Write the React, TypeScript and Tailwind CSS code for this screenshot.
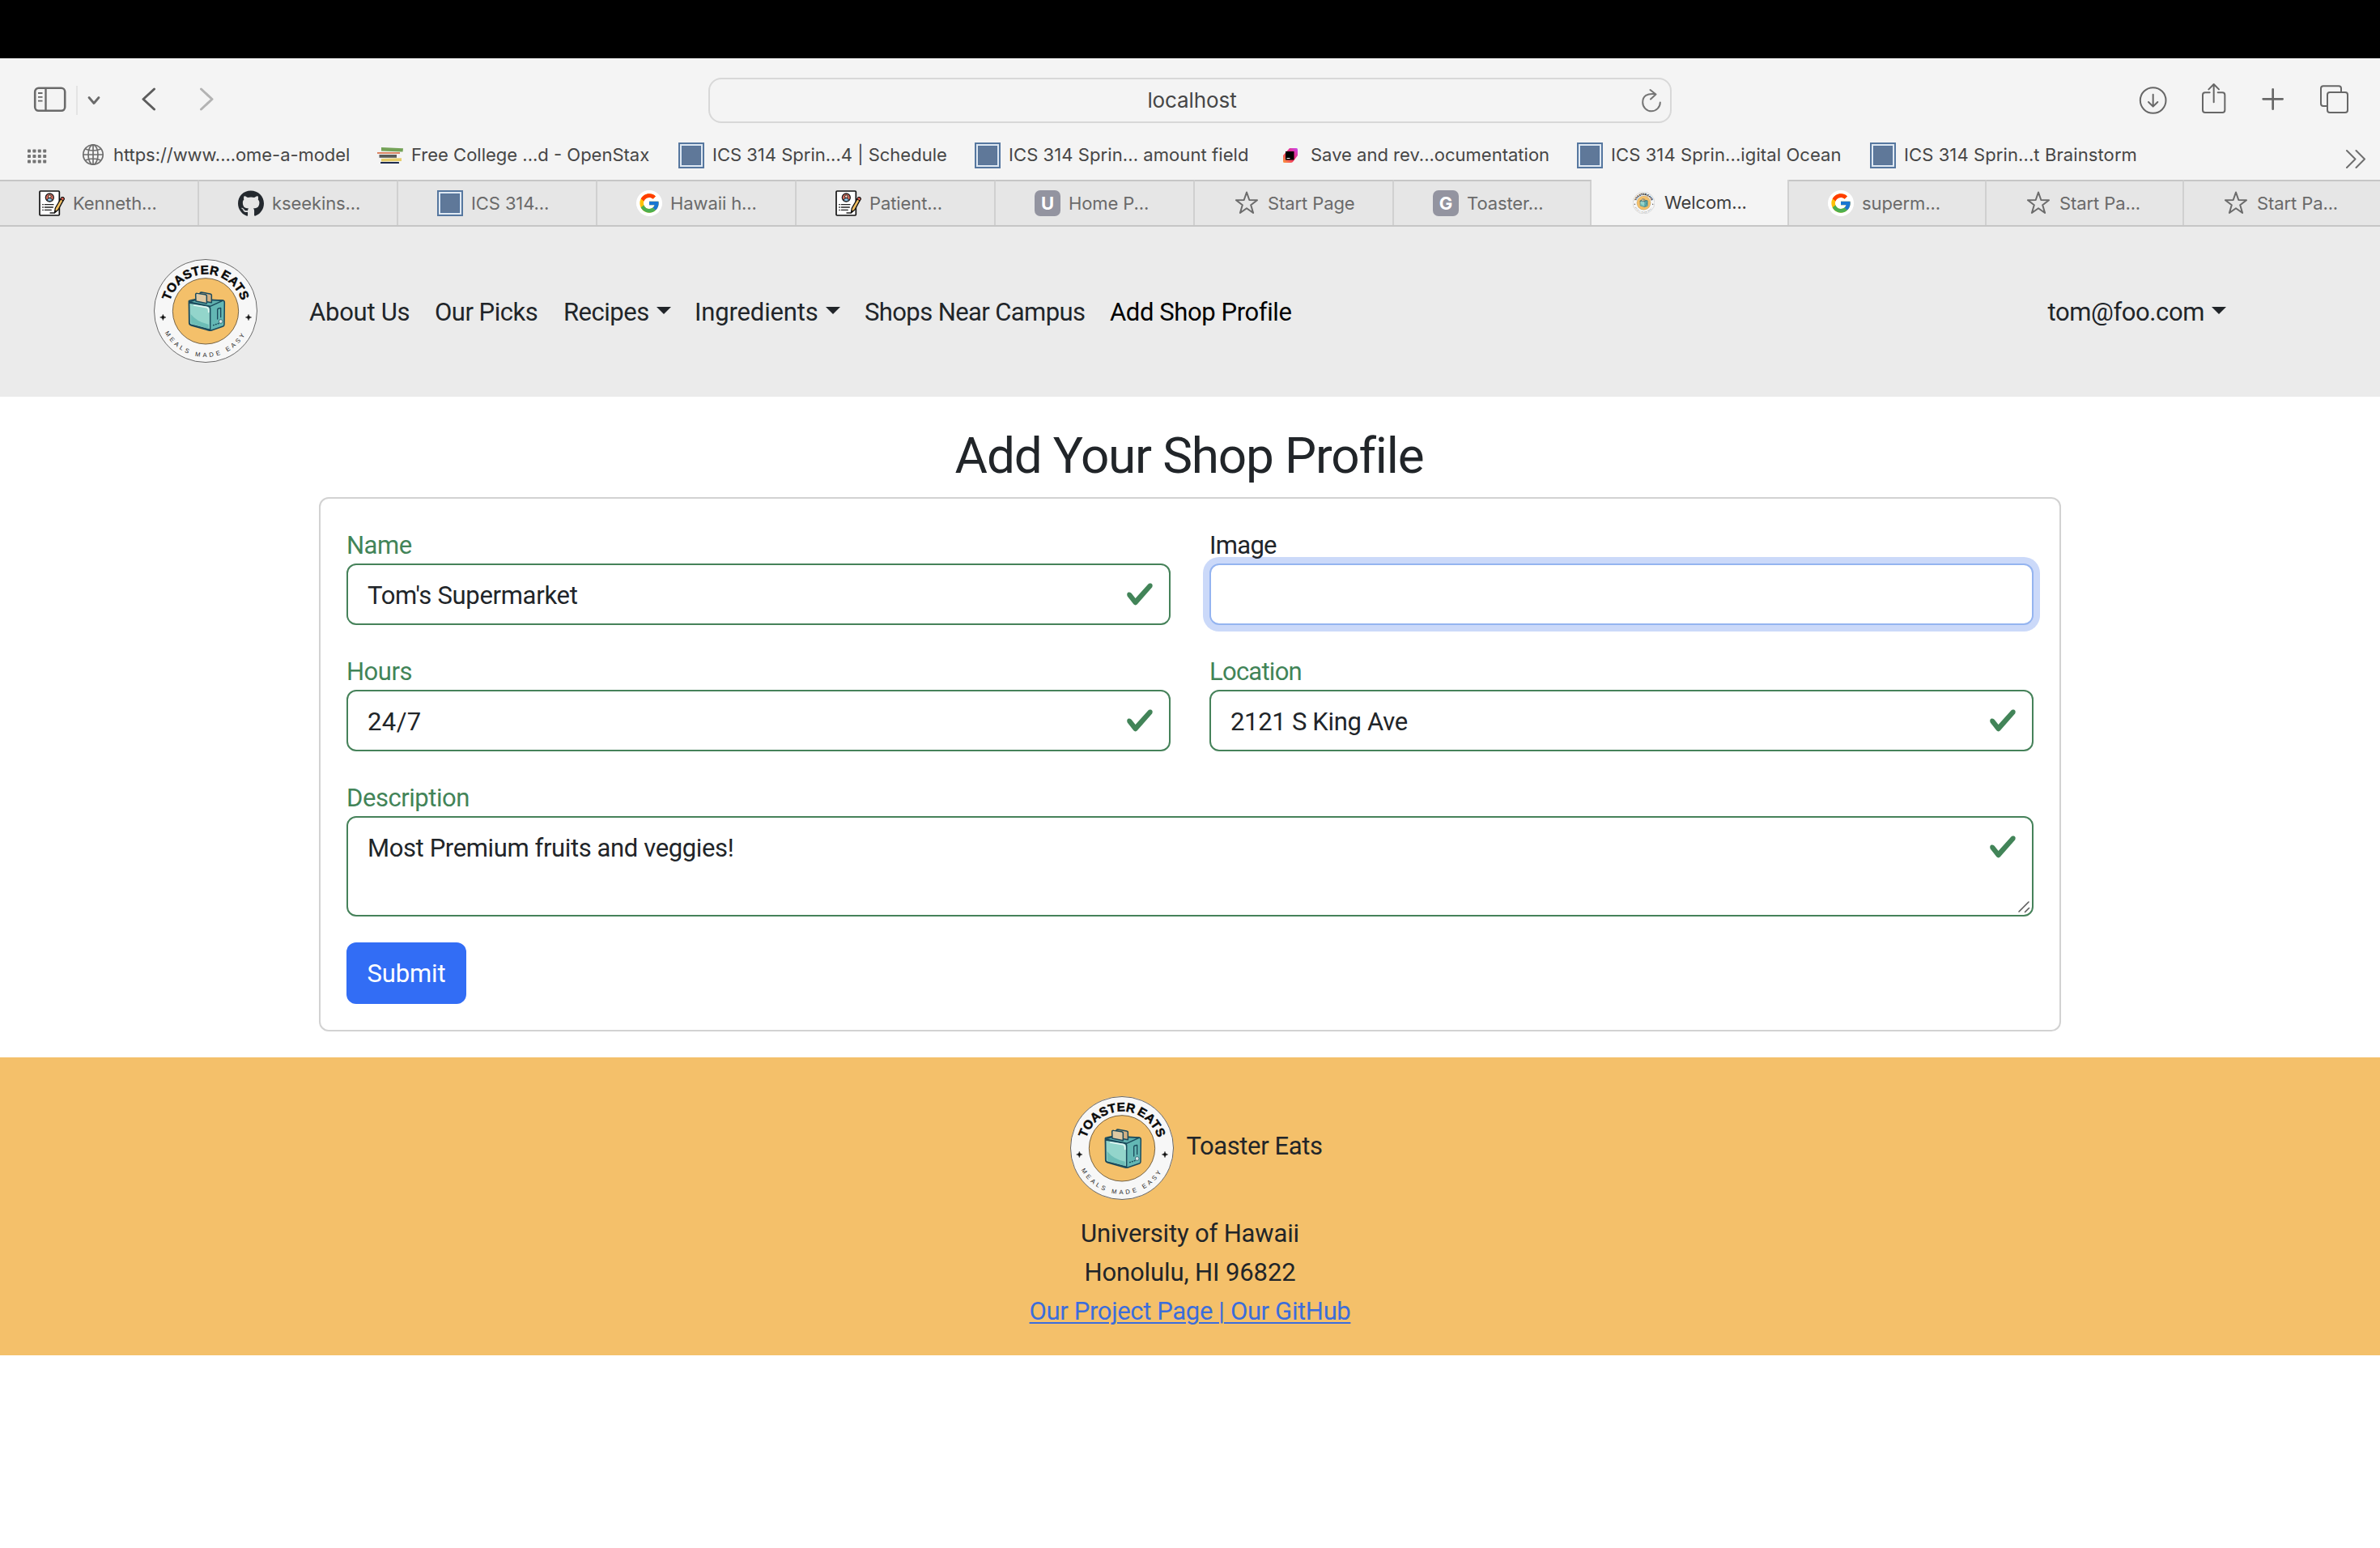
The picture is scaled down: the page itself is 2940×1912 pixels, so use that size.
import type { ReactNode } from "react";
import { FaGithub } from "react-icons/fa";
import { FcGoogle } from "react-icons/fc";

function ToasterLogo({ className }: { className: string }) {
  return (
    <svg className={className} viewBox="29 28 384 384" fill="none">
      <defs>
        <path id="logo-top" d="M 83 222 A 138 138 0 0 1 359 222" />
        <path id="logo-bottom" d="M 50 220 A 171 171 0 0 0 392 220" />
      </defs>
      <circle cx="221" cy="220" r="156" stroke="#f7f7f7" strokeWidth="70" />
      <circle cx="221" cy="220" r="190.5" stroke="#4a4a4a" strokeWidth="2.5" />
      <circle cx="221" cy="221" r="122" fill="#f4c06a" stroke="#5b4a30" strokeWidth="2.5" />
      <text className="font-['Liberation_Sans'] font-bold" fontSize="46" letterSpacing="0.8" wordSpacing="-5" fill="#0a0a0a" stroke="#0a0a0a" strokeWidth="1.4" textAnchor="middle">
        <textPath href="#logo-top" startOffset="50%">TOASTER EATS</textPath>
      </text>
      <text className="font-['Liberation_Sans']" fontSize="23" letterSpacing="10" fill="#2b2b2b" textAnchor="middle">
        <textPath href="#logo-bottom" startOffset="50%">MEALS MADE EASY</textPath>
      </text>
      <path d="M63 233 Q64 243 74 244 Q64 245 63 255 Q62 245 52 244 Q62 243 63 233Z" fill="#111" stroke="#111" strokeWidth="1.5" />
      <path d="M380 233 Q381 243 391 244 Q381 245 380 255 Q379 245 369 244 Q379 243 380 233Z" fill="#111" stroke="#111" strokeWidth="1.5" />
      <g stroke="#1b4a5c" strokeWidth="4.5" strokeLinejoin="round" strokeLinecap="round">
        <path d="M159 186 Q158 182 164 181 L190 176 L284 181 Q291 182 291 189 L290 270 Q290 275 286 277 L243 292 Q238 294 232 292 L168 274 Q160 271 160 264Z" fill="#63b7b4" />
        <path d="M160 190 L230 202 Q238 204 238 212 V290 L168 272 Q161 270 161 264Z" fill="#93d5cb" />
        <path d="M160 187 L190 177 L284 182 L238 203Z" fill="#5fb0ae" />
        <path d="M200 155 Q200 151 205 151 L238 157 Q244 158 243 165 V189 L202 182Z" fill="#d3b083" />
        <path d="M184 160 Q184 154 190 155 L219 159 Q226 160 225 167 V192 L185 184Z" fill="#dfc9a2" />
        <path d="M265 250 V216 Q265 212 269 211 L277 209 V243" strokeWidth="4" />
        <path d="M250 273 L270 266" strokeWidth="4.5" strokeDasharray="2 7" />
      </g>
      <path d="M166 232 Q190 262 232 270 V286 L172 269 Q166 268 166 262Z" fill="#6dbdb6" />
      <path d="M178 199 L225 207 Q233 209 232 224" stroke="#e2f6f2" strokeWidth="5" strokeLinecap="round" />
      <circle cx="277" cy="259" r="7" fill="#d5e6e8" stroke="#1b4a5c" strokeWidth="2" />
    </svg>
  );
}

function ResumeIcon() {
  return (
    <svg className="size-8" viewBox="0 0 96 96" fill="none">
      <rect x="3" y="3" width="73" height="90" rx="3" fill="#fff" stroke="#111" strokeWidth="5" />
      <circle cx="40" cy="27" r="15" fill="#e4705f" stroke="#222" strokeWidth="4" />
      <circle cx="40" cy="23" r="5.5" fill="#f8d9c4" stroke="#222" strokeWidth="3" />
      <path d="M30 38 Q31 29 40 29 Q49 29 50 38 Q40 44 30 38Z" fill="#8fc5ea" stroke="#222" strokeWidth="3" />
      <path d="M22 53H54M22 63H52M22 73H46M14 53h2M14 63h2M14 73h2M42 84H56" stroke="#222" strokeWidth="4" strokeLinecap="round" />
      <path d="M58 84 L61 66 L84 27 Q90 23 94 31 L72 72Z" fill="#f0bf62" stroke="#111" strokeWidth="4" strokeLinejoin="round" />
      <path d="M80 33 L84 26 Q91 23 94 32 L91 39Z" fill="#dc5f4e" stroke="#111" strokeWidth="3" />
      <path d="M58 84 L60 74 L66 78Z" fill="#111" />
    </svg>
  );
}

function CourseIcon() {
  return (
    <span className="block size-8 border-2 border-[#56779f] bg-[#dfe8f2] p-[2px]">
      <span className="block size-full border border-[#54749c] bg-[#5f7899]" />
    </span>
  );
}

function LetterIcon({ children }: { children: ReactNode }) {
  return <span className="flex size-8 items-center justify-center rounded-[7px] bg-[#9394a0] text-[22px] leading-none font-bold text-white">{children}</span>;
}

function GoogleIcon() {
  return (
    <span className="flex size-8 items-center justify-center rounded-full bg-white">
      <FcGoogle className="size-7" />
    </span>
  );
}

function StarIcon() {
  return (
    <svg className="size-8" viewBox="0 0 32 32" fill="none" stroke="#6b6b6b" strokeWidth="2" strokeLinejoin="round">
      <path d="M16 2.5 L19.3 12 L29 12.2 L21.2 18.2 L24.1 28 L16 22.2 L7.9 28 L10.8 18.2 L3 12.2 L12.7 12Z" />
    </svg>
  );
}

function GlobeIcon() {
  return (
    <svg className="ml-[2px] size-[28px]" viewBox="0 0 28 28" fill="none" stroke="#6e6e6e" strokeWidth="1.7">
      <circle cx="14" cy="13" r="12.2" />
      <ellipse cx="14" cy="13" rx="6" ry="12.2" />
      <path d="M14 .8V25.2M1.8 13H26.2M4.3 6Q14 10 23.7 6M4.3 20Q14 16 23.7 20" />
    </svg>
  );
}

function BooksIcon() {
  return (
    <svg className="h-5 w-8" viewBox="0 0 32 20">
      <path d="M5 0L32 1.2L31.5 5.6L5 4.6Z" fill="#74a257" />
      <rect x="0" y="6" width="28" height="1.9" fill="#d9805c" />
      <rect x="2.5" y="9" width="21.5" height="3.8" fill="#595b57" />
      <path d="M5 14L30 13.3V17L5 17.4Z" fill="#e6cd6b" />
      <rect x="4" y="18" width="23" height="2" rx=".6" fill="#1d2b4f" />
    </svg>
  );
}

function JetbrainsIcon() {
  return (
    <svg className="ml-[2px] h-[18px] w-[18px]" viewBox="0 0 18 18">
      <defs>
        <linearGradient id="jb" x1="1" y1="0" x2="0" y2="1">
          <stop offset="0" stopColor="#c64bf0" />
          <stop offset=".5" stopColor="#f0286a" />
          <stop offset="1" stopColor="#fb9a3c" />
        </linearGradient>
      </defs>
      <path d="M8 0H16.5Q18 0 18 1.5V9L12 17Q11 18 9.5 18H1.5Q0 18 0 16.5V9Z" fill="url(#jb)" />
      <rect x="3" y="4" width="10.5" height="10.5" fill="#000" />
      <rect x="4.5" y="12" width="4" height="1" fill="#fff" />
    </svg>
  );
}

const bookmarks = [
  { label: "https://www....ome-a-model", icon: <GlobeIcon />, width: "w-[368px] tracking-[-0.06px]" },
  { label: "Free College ...d - OpenStax", icon: <BooksIcon />, width: "w-[372px]" },
  { label: "ICS 314 Sprin...4 | Schedule", icon: <CourseIcon />, width: "w-[366px]" },
  { label: "ICS 314 Sprin... amount field", icon: <CourseIcon />, width: "w-[373px] tracking-[0.08px]" },
  { label: "Save and rev...ocumentation", icon: <JetbrainsIcon />, width: "w-[371px]" },
  { label: "ICS 314 Sprin...igital Ocean", icon: <CourseIcon />, width: "w-[362px] tracking-[0.1px]" },
  { label: "ICS 314 Sprin...t Brainstorm", icon: <CourseIcon />, width: "w-[362px] tracking-[0.1px]" },
];

const tabs = [
  { label: "Kenneth...", icon: <ResumeIcon /> },
  { label: "kseekins...", icon: <FaGithub className="size-[33px] text-[#24292f]" /> },
  { label: "ICS 314...", icon: <CourseIcon /> },
  { label: "Hawaii h...", icon: <GoogleIcon /> },
  { label: "Patient...", icon: <ResumeIcon /> },
  { label: "Home P...", icon: <LetterIcon>U</LetterIcon> },
  { label: "Start Page", icon: <StarIcon /> },
  { label: "Toaster...", icon: <LetterIcon>G</LetterIcon>, narrow: true },
  { label: "Welcom...", icon: <ToasterLogo className="size-[27px]" />, active: true },
  { label: "superm...", icon: <GoogleIcon />, narrow: true },
  { label: "Start Pa...", icon: <StarIcon />, narrow: true },
  { label: "Start Pa...", icon: <StarIcon />, last: true },
];

function tabClass(tab: (typeof tabs)[number]) {
  if (tab.active) return "w-[244px] border-r-2 border-[#d0d0d0] bg-[#f4f4f4] text-[#3d3d3d]";
  if (tab.narrow) return "w-[244px] border-r-2 border-[#d0d0d0] border-t-2 border-t-[#c6c6c6] bg-[#e6e6e6] text-[#6a6a6a]";
  if (tab.last) return "w-[242px] border-t-2 border-t-[#c6c6c6] bg-[#e6e6e6] text-[#6a6a6a]";
  return "w-[246px] border-r-2 border-[#d0d0d0] border-t-2 border-t-[#c6c6c6] bg-[#e6e6e6] text-[#6a6a6a]";
}

function BrowserChrome() {
  return (
    <div className="bg-[#f4f4f4] font-['Inter',sans-serif]">
      <div className="h-[72px] bg-black" />
      <div className="flex h-[104px] items-center">
        <svg className="mb-[2px] ml-[41px] h-8 w-[41px]" viewBox="0 0 41 32" fill="none" stroke="#6a6a6a">
          <rect x="2.2" y="1.8" width="37" height="28" rx="4.5" strokeWidth="2.6" />
          <path d="M15.5 2V30" strokeWidth="2.4" />
          <path d="M6 8h5.5M6 12.8h5.5M6 17.6h5.5" strokeWidth="1.8" />
        </svg>
        <div className="ml-3 h-9 w-[2px] bg-[#e4e4e4]" />
        <svg className="ml-[12px] h-3 w-4" viewBox="0 0 16 12" fill="none" stroke="#6a6a6a" strokeWidth="2.8" strokeLinecap="round" strokeLinejoin="round">
          <path d="M2 2.5L8 9.5L14 2.5" />
        </svg>
        <svg className="mb-[2px] ml-[50px] h-[30px] w-5" viewBox="0 0 20 30" fill="none" stroke="#5c5c5c" strokeWidth="3" strokeLinecap="round" strokeLinejoin="round">
          <path d="M16.5 2L3 14.5L16.5 27" />
        </svg>
        <svg className="mb-[2px] ml-[51px] h-[30px] w-5" viewBox="0 0 20 30" fill="none" stroke="#b3b3b3" strokeWidth="3" strokeLinecap="round" strokeLinejoin="round">
          <path d="M3.5 2L17 14.5L3.5 27" />
        </svg>
        <div className="ml-[610px] flex h-14 w-[1190px] items-center rounded-2xl border-2 border-[#d8d8d8]">
          <div className="ml-[42px] flex-1 text-center text-[26px] leading-8 tracking-[-0.1px] text-[#464646]">localhost</div>
          <svg className="mr-[9px] h-[30px] w-7" viewBox="0 0 28 30" fill="none" stroke="#757575" strokeWidth="2" strokeLinecap="round" strokeLinejoin="round">
            <path d="M12.5 2L19.5 7.5L13 13.5M19 7.3Q3.2 5.5 3.2 17.5A10.8 10.8 0 0 0 24.8 17.5" />
          </svg>
        </div>
        <svg className="ml-[577px] size-[35px]" viewBox="66 33 105 105" fill="none" stroke="#676767" strokeWidth="6" strokeLinecap="round" strokeLinejoin="round">
          <circle cx="119" cy="84" r="47.5" />
          <path d="M119 62V106M102 90L119 107L136 90" />
        </svg>
        <svg className="mb-[5px] ml-[42px] h-[39px] w-[31px]" viewBox="297 21 93 117" fill="none" stroke="#676767" strokeWidth="6" strokeLinecap="round" strokeLinejoin="round">
          <path d="M329 58H312Q303 58 303 67V123Q303 132 312 132H376Q385 132 385 123V67Q385 58 376 58H359M344 94V27M325 46L344 27L363 46" />
        </svg>
        <svg className="mb-[3px] ml-[43px] size-[29px]" viewBox="519 39 87 87" fill="none" stroke="#676767" strokeWidth="8" strokeLinecap="round">
          <path d="M527 82H599M563 46V119" />
        </svg>
        <svg className="mb-[3px] ml-[43px] h-[37px] w-[36px]" viewBox="735 27 108 111" fill="none" stroke="#676767" strokeWidth="6" strokeLinecap="round">
          <path d="M762 108H750Q741 108 741 99V43Q741 34 750 34H807Q816 34 816 43V54" />
          <rect x="765" y="57" width="75" height="75" rx="9" />
        </svg>
      </div>
      <div className="flex h-[46px]">
        <svg className="mt-2 ml-[34px] h-[18px] w-6" viewBox="0 0 24 18" fill="#747474">
          {[0.5, 7, 13.5].map((y) => [0, 6.4, 12.8, 19.2].map((x) => <rect key={`${x}-${y}`} x={x} y={y} width="4" height="4" rx=".8" />))}
        </svg>
        <div className="ml-10 flex h-8 flex-1">
          {bookmarks.map((b) => (
            <div key={b.label} className={`${b.width} flex shrink-0 items-center gap-[10px]`}>
              <span className="flex w-8 shrink-0 items-center justify-center">{b.icon}</span>
              <span className="mb-[2px] text-[22px] leading-7 whitespace-nowrap text-[#464646]">{b.label}</span>
            </div>
          ))}
        </div>
        <svg className="mt-2 mr-4 h-6 w-[27px] shrink-0" viewBox="0 0 27 24" fill="none" stroke="#6e6e6e" strokeWidth="2" strokeLinecap="round" strokeLinejoin="round">
          <path d="M2 2L12.5 12.5L2 23M13.5 2L24 12.5L13.5 23" />
        </svg>
      </div>
      <div className="flex h-[58px] border-b-2 border-[#c6c6c6]">
        {tabs.map((tab, i) => (
          <div key={i} className={`${tabClass(tab)} flex shrink-0 items-center gap-[10px] pl-12`}>
            <span className="flex size-8 shrink-0 items-center justify-center">{tab.icon}</span>
            <span className="text-[22px] leading-7 tracking-[-0.1px] whitespace-nowrap">{tab.label}</span>
          </div>
        ))}
      </div>
    </div>
  );
}

const caret = <span className="mb-[5px] h-0 w-0 border-x-[9px] border-t-[9px] border-x-transparent border-t-current" />;

const navItems = [
  { label: "About Us", box: "w-[155px] tracking-[-0.25px]" },
  { label: "Our Picks", box: "w-[159px] tracking-[-0.5px]" },
  { label: "Recipes", box: "w-[162px] tracking-[-0.5px]", menu: true },
  { label: "Ingredients", box: "w-[210px] tracking-[-0.15px]", menu: true },
  { label: "Shops Near Campus", box: "w-[303px] tracking-[-0.6px]" },
  { label: "Add Shop Profile", box: "w-[240px] tracking-[-0.4px] text-black" },
];

function NavBar() {
  return (
    <nav className="flex h-[210px] items-center bg-[#ebebeb] pb-[2px]">
      <ToasterLogo className="ml-[190px] size-32 shrink-0" />
      <div className="ml-16 flex pt-[3px]">
        {navItems.map((n) => (
          <div key={n.label} className={`${n.box} flex items-center gap-[9px] leading-[48px] whitespace-nowrap`}>
            <span>{n.label}</span>
            {n.menu && caret}
          </div>
        ))}
      </div>
      <div className="mr-[190px] ml-auto flex items-center gap-[9px] pt-[3px] leading-[48px]">
        <span className="tracking-[-0.4px]">tom@foo.com</span>
        {caret}
      </div>
    </nav>
  );
}

function CheckMark({ className }: { className: string }) {
  return (
    <svg className={`${className} size-9 shrink-0`} viewBox="0 0 8 8" fill="#428458">
      <path d="M2.3 6.73.6 4.53c-.4-1.04.46-1.4 1.1-.8l1.1 1.4 3.4-3.8c.6-.63 1.6-.27 1.2.7l-4 4.6c-.43.5-.8.4-1.1.1z" />
    </svg>
  );
}

function Field({ label, value, labelTracking = "", valueTracking = "", focused = false }: { label: string; value?: string; labelTracking?: string; valueTracking?: string; focused?: boolean }) {
  return (
    <div>
      <div className={`${labelTracking} ${focused ? "text-[#212529]" : "text-[#428458]"} relative z-10 h-12 pt-[2px] leading-[48px]`}>{label}</div>
      <div className={`${focused ? "border-[#94b4f0] ring-8 ring-[#cbd9f9]" : "border-[#46825a]"} flex h-[76px] items-center justify-between rounded-xl border-2 bg-white pr-[18px] pl-6`}>
        <span className={`${valueTracking} pt-[3px] leading-[48px]`}>{value}</span>
        {!focused && <CheckMark className="" />}
      </div>
    </div>
  );
}

function ShopForm() {
  return (
    <main className="flex flex-col items-center">
      <h1 className="flex h-[124px] items-center pt-[21px] pr-[2px] text-[62px] leading-[72px] font-normal tracking-[-1.15px]">Add Your Shop Profile</h1>
      <section className="mb-8 h-[660px] w-[2152px] rounded-xl border-2 border-[#d2d2d2] p-8">
        <div className="grid grid-cols-2 gap-x-12 gap-y-8">
          <Field label="Name" value="Tom's Supermarket" labelTracking="tracking-[-0.5px]" valueTracking="tracking-[-0.3px]" />
          <Field label="Image" labelTracking="tracking-[-0.7px]" focused />
          <Field label="Hours" value="24/7" labelTracking="tracking-[-0.5px]" valueTracking="tracking-[0.4px]" />
          <Field label="Location" value="2121 S King Ave" labelTracking="tracking-[-0.75px]" valueTracking="tracking-[-0.3px]" />
        </div>
        <div className="mt-8 h-12 pt-[2px] leading-[48px] tracking-[-0.45px] text-[#428458]">Description</div>
        <div className="relative flex h-[124px] items-start justify-between rounded-xl border-2 border-[#46825a] pt-3 pr-[18px] pl-6">
          <span className="pt-[2px] leading-[48px] tracking-[-0.38px]">Most Premium fruits and veggies!</span>
          <CheckMark className="mt-[6px]" />
          <svg className="absolute right-px bottom-px size-4" viewBox="0 0 16 16" stroke="#5c5c5c" strokeWidth="1.6" strokeLinecap="round">
            <path d="M1 13L13 1M8.5 13.5L13.5 8.5" />
          </svg>
        </div>
        <button className="mt-8 flex h-[76px] w-[148px] items-center justify-center rounded-xl bg-[#326df5] pt-[3px] tracking-[-0.1px] text-white">Submit</button>
      </section>
    </main>
  );
}

function Footer() {
  return (
    <footer className="flex h-[368px] flex-col items-center bg-[#f4c06a] pt-12">
      <div className="flex h-[128px] items-center gap-[15px] pl-[16px]">
        <ToasterLogo className="size-32" />
        <span className="mb-[5px] leading-[48px] tracking-[-0.4px]">Toaster Eats</span>
      </div>
      <div className="mt-[18px] text-center leading-[48px]">
        <div className="tracking-[-0.15px]">University of Hawaii</div>
        <div className="tracking-[-0.1px]">Honolulu, HI 96822</div>
        <a className="tracking-[-0.35px] text-[#3b6ddc] underline decoration-2 underline-offset-[3px]">Our Project Page | Our GitHub</a>
      </div>
    </footer>
  );
}

export default function App() {
  return (
    <div className="h-[1912px] w-[2940px] overflow-hidden bg-white font-['Roboto',sans-serif] text-[31px] text-[#212529]">
      <BrowserChrome />
      <NavBar />
      <ShopForm />
      <Footer />
    </div>
  );
}
